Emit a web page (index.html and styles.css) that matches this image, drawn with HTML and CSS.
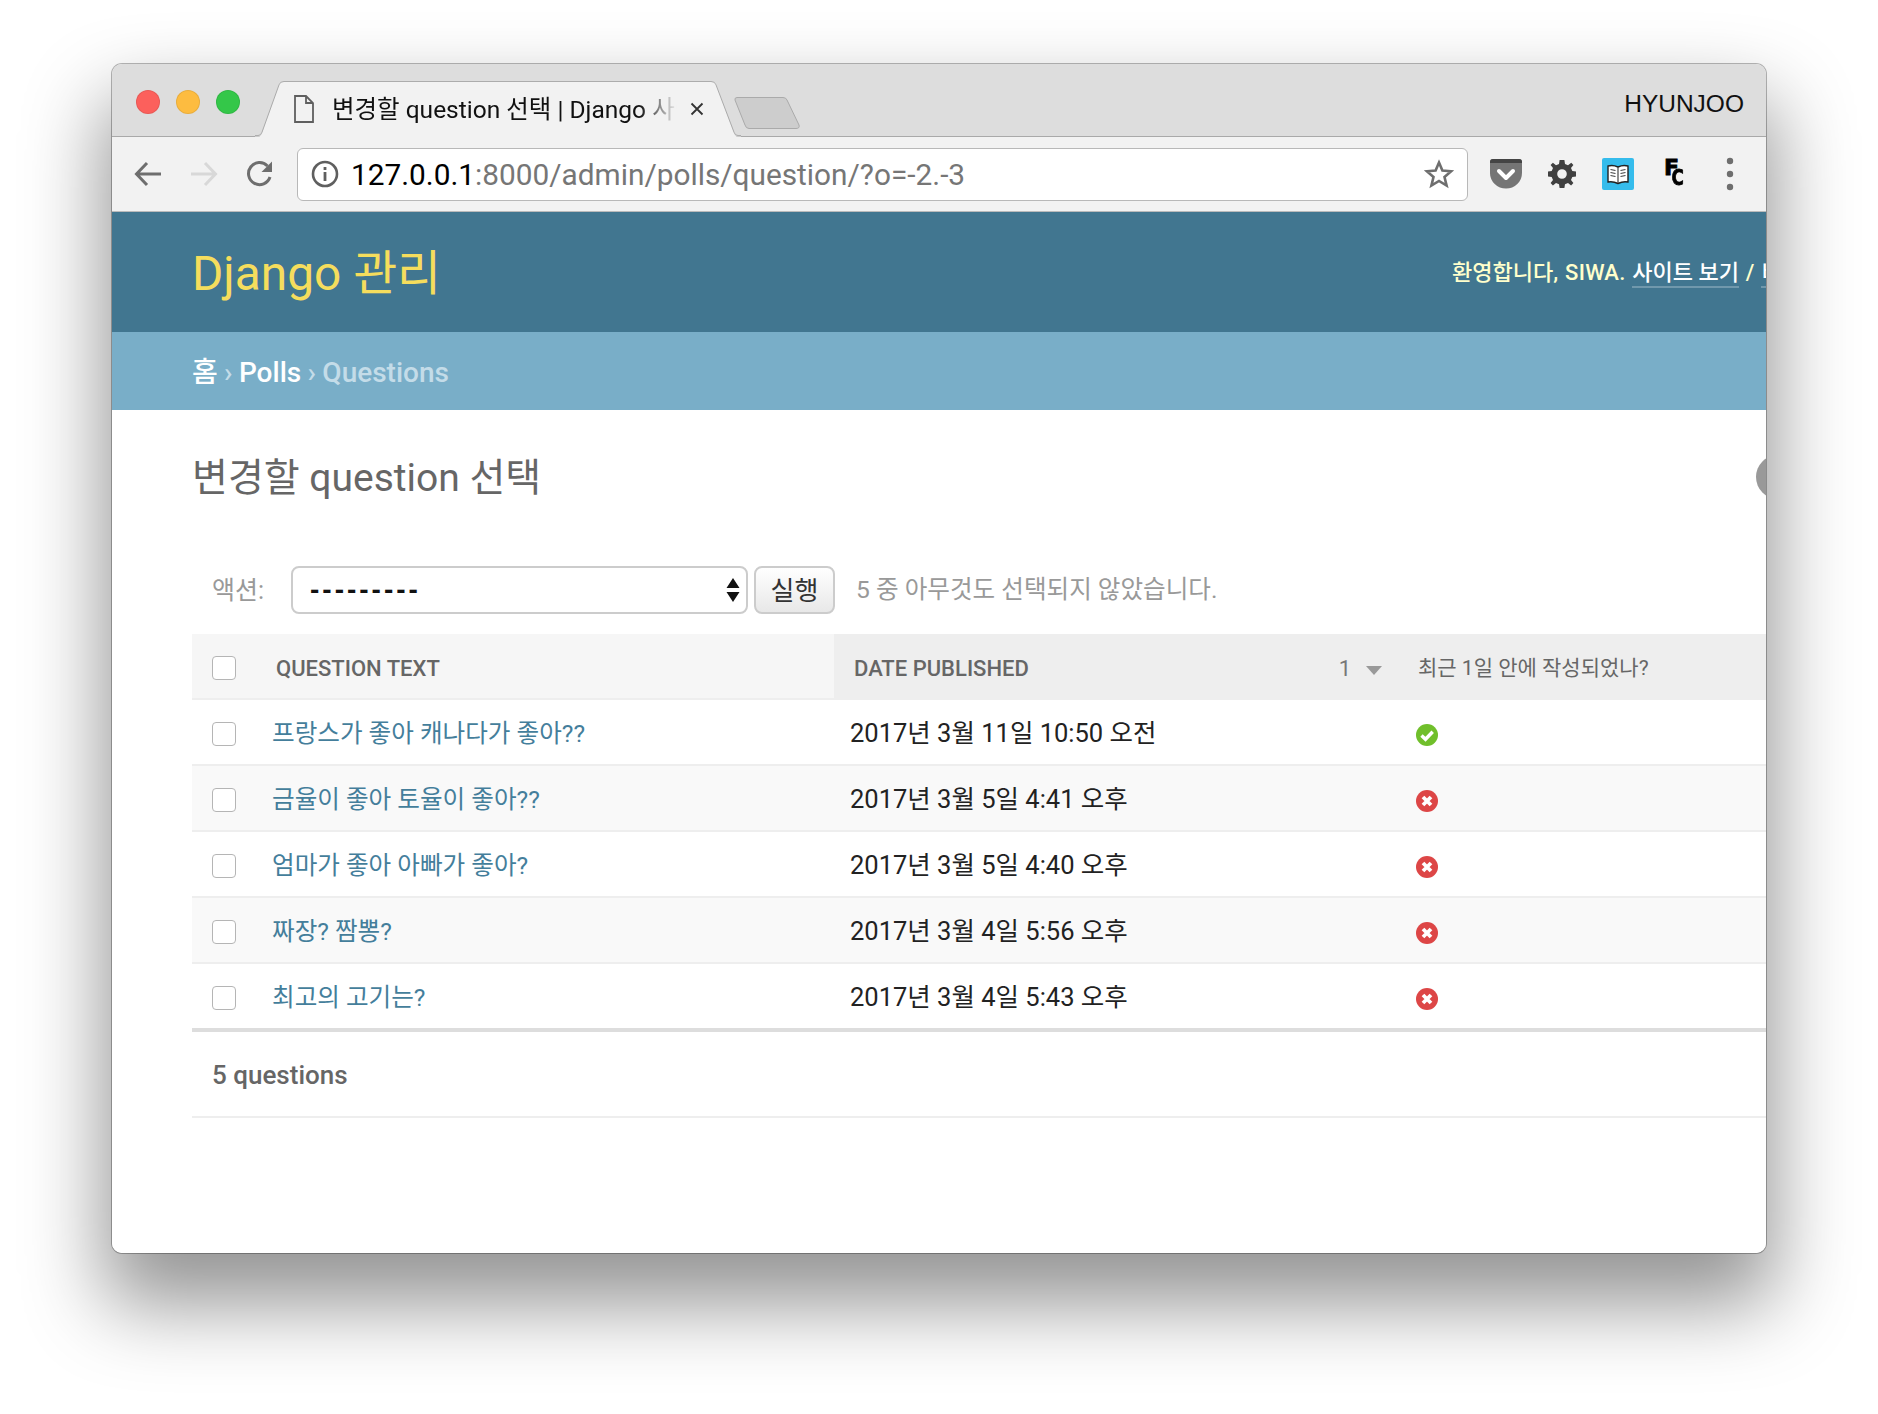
FILE: index.html
```html
<!DOCTYPE html>
<html lang="ko">
<head>
  <meta charset="utf-8" />
  <title>변경할 question 선택 | Django 사이트 관리</title>
  <link rel="stylesheet" href="styles.css">
</head>
<body>
  <div class="window">
    <div class="titlebar">
      <div class="lights">
        <span class="light red"></span>
        <span class="light yellow"></span>
        <span class="light green"></span>
      </div>
      <div class="tab">
        <svg class="tab-shape" width="486" height="56" viewBox="0 0 486 58" preserveAspectRatio="none">
          <path d="M0 57.5 H3 Q6 57.5 7 54 L24 4 Q25 .5 29 .5 H456 Q460 .5 461 4 L479 54 Q480 57.5 483 57.5 H486 V58 H0Z" fill="#f2f2f2"/>
          <path d="M0 56.5 H3 Q6 56.5 7 53 L24 4 Q25 .5 29 .5 H456 Q460 .5 461 4 L479 53 Q480 56.5 483 56.5 H486" fill="none" stroke="#a9a9a9"/>
        </svg>
        <svg class="doc-icon" width="20" height="28" viewBox="0 0 20 28">
          <path d="M1 1 H12 L19 8 V27 H1Z M12 1 V8 H19" fill="none" stroke="#5f5f5f" stroke-width="1.8"/>
        </svg>
        <span class="tab-title">변경할 question 선택 | Django 사이트 관리</span>
        <svg class="tab-close" width="14" height="14" viewBox="0 0 14 14">
          <path d="M1.5 1.5 L12.5 12.5 M12.5 1.5 L1.5 12.5" stroke="#333" stroke-width="1.8"/>
        </svg>
      </div>
      <svg class="newtab" width="66" height="32" viewBox="0 0 66 32">
        <path d="M3 .5 H49 Q52 .5 53 3 L65 28 Q66 31.5 62 31.5 H15 Q12 31.5 11 28 L1 3 Q.5 .5 3 .5Z" fill="#cdcdcd" stroke="#aaa"/>
      </svg>
      <span class="profile">HYUNJOO</span>
    </div>

    <div class="toolbar">
      <svg class="nav-icon back" width="28" height="28" viewBox="0 0 28 28">
        <path d="M27 14 H3 M13 3 L2.5 14 L13 25" fill="none" stroke="#6e6e6e" stroke-width="3"/>
      </svg>
      <svg class="nav-icon" width="28" height="28" viewBox="0 0 28 28">
        <path d="M1 14 H25 M15 3 L25.5 14 L15 25" fill="none" stroke="#d8d8d8" stroke-width="3"/>
      </svg>
      <svg class="nav-icon" width="28" height="28" viewBox="0 0 28 28">
        <path d="M24 17 A11 11 0 1 1 21.5 6" fill="none" stroke="#6e6e6e" stroke-width="3"/>
        <path d="M15.5 12 L26 12 L26 1.5Z" fill="#6e6e6e"/>
      </svg>
      <div class="omnibox">
        <svg class="info-icon" width="28" height="28" viewBox="0 0 28 28">
          <circle cx="14" cy="14" r="12" fill="none" stroke="#5f5f5f" stroke-width="2.6"/>
          <rect x="12.6" y="12" width="2.8" height="9" fill="#5f5f5f"/>
          <rect x="12.6" y="7" width="2.8" height="3" fill="#5f5f5f"/>
        </svg>
        <span class="url"><span class="url-host">127.0.0.1</span>:8000/admin/polls/question/?o=-2.-3</span>
        <svg class="star-icon" width="30" height="30" viewBox="0 0 30 30">
          <path d="M15 3.5 L18.4 11.6 L27.2 12.3 L20.5 18 L22.6 26.6 L15 22 L7.4 26.6 L9.5 18 L2.8 12.3 L11.6 11.6Z" fill="none" stroke="#6e6e6e" stroke-width="2.6"/>
        </svg>
      </div>
      <div class="extensions">
        <svg class="ext-pocket" width="32" height="30" viewBox="0 0 32 30">
          <path d="M0 3 Q0 0 3 0 H29 Q32 0 32 3 V14 A16 15.5 0 0 1 0 14Z" fill="#757575"/>
          <path d="M0 3 Q0 0 3 0 H29 Q32 0 32 3 V4 H0Z" fill="#444"/>
          <path d="M9 12 L16 19 L23 12" fill="none" stroke="#fff" stroke-width="4" stroke-linecap="round" stroke-linejoin="round"/>
        </svg>
        <svg class="ext-gear" width="28" height="28" viewBox="0 0 28 28">
          <path d="M11.6 0 H16.4 L17 4 L20 5.2 L23.3 2.8 L25.4 4.9 L23 8 L24.3 11 L28 11.6 V16.4 L24.3 17 L23 20 L25.4 23.1 L23.1 25.4 L20 23 L17 24.3 L16.4 28 H11.6 L11 24.3 L8 23 L4.9 25.4 L2.6 23.1 L5 20 L3.7 17 L0 16.4 V11.6 L3.7 11 L5 8 L2.6 4.9 L4.9 2.8 L8 5.2 L11 4Z M14 9.2 A4.8 4.8 0 1 0 14 18.8 A4.8 4.8 0 1 0 14 9.2Z" fill="#404040" fill-rule="evenodd"/>
        </svg>
        <svg class="ext-book" width="32" height="32" viewBox="0 0 32 32">
          <rect width="32" height="32" rx="2" fill="#35bcec"/>
          <path d="M16 9 Q11 6.500 6 8 V24 Q11 23 16 25.500 Q21 23 26 24 V8 Q21 6.500 16 9Z" fill="#fff" stroke="#222" stroke-width="1.400"/>
          <path d="M16 9 V25 M8.500 11.500 L13.500 12.500 M8.500 14.500 L13.500 15.500 M8.500 17.500 L13.500 18.500 M18.500 12.500 L23.500 11.500 M18.500 15.500 L23.500 14.500 M18.500 18.500 L23.500 17.500" stroke="#444" stroke-width="1.200"/>
        </svg>
        <span class="fc-badge"><span class="fc-f">F</span><span class="fc-c">C</span></span>
        <svg class="ext-menu" width="8" height="34" viewBox="0 0 8 34">
          <circle cx="4" cy="4" r="3.200" fill="#6e6e6e"/>
          <circle cx="4" cy="17" r="3.200" fill="#6e6e6e"/>
          <circle cx="4" cy="30" r="3.200" fill="#6e6e6e"/>
        </svg>
      </div>
    </div>

    <div class="page">
      <header class="site-header">
        <h1 class="branding">Django 관리</h1>
        <div class="user-tools">환영합니다, <b>SIWA</b>. <a>사이트 보기</a> / <a>비밀번호 변경</a> / <a>로그아웃</a></div>
      </header>
      <div class="breadcrumbs"><a>홈</a> › <a>Polls</a> › Questions</div>

      <main class="content">
        <span class="float-dot"></span>
        <h2 class="page-title">변경할 question 선택</h2>
        <div class="actions">
          <label class="actions-label">액션:</label>
          <div class="fake-select">
            <span class="select-value">---------</span>
            <svg width="14" height="24" viewBox="0 0 14 24">
              <path d="M7 0 L13.500 10 H.5Z M.5 14 H13.500 L7 24Z" fill="#111"/>
            </svg>
          </div>
          <button class="go-btn">실행</button>
          <span class="action-counter">5 중 아무것도 선택되지 않았습니다.</span>
        </div>

        <table class="results">
          <colgroup>
            <col class="col-check"><col class="col-text"><col class="col-date"><col class="col-recent">
          </colgroup>
          <thead>
            <tr>
              <th><span class="check"></span></th>
              <th class="th-text">QUESTION TEXT</th>
              <th class="th-date sorted">
                <div class="th-date-inner"><span>DATE PUBLISHED</span><span class="sort-num">1</span><span class="sort-arrow"></span></div>
              </th>
              <th class="th-recent sorted">최근 1일 안에 작성되었나?</th>
            </tr>
          </thead>
          <tbody>
            <tr>
              <td><span class="check"></span></td>
              <td class="td-text"><a>프랑스가 좋아 캐나다가 좋아??</a></td>
              <td class="td-date">2017년 3월 11일 10:50 오전</td>
              <td class="td-icon">
                <svg width="22" height="22" viewBox="0 0 22 22"><circle cx="11" cy="11" r="11" fill="#70bf2b"/><path d="M5.500 11.500 L9.500 15.300 L16.700 7.800" fill="none" stroke="#fff" stroke-width="3.400"/></svg>
              </td>
            </tr>
            <tr>
              <td><span class="check"></span></td>
              <td class="td-text"><a>금율이 좋아 토율이 좋아??</a></td>
              <td class="td-date">2017년 3월 5일 4:41 오후</td>
              <td class="td-icon">
                <svg width="22" height="22" viewBox="0 0 22 22"><circle cx="11" cy="11" r="11" fill="#dd4646"/><path d="M7 7 L15 15 M15 7 L7 15" stroke="#fff" stroke-width="3.800"/></svg>
              </td>
            </tr>
            <tr>
              <td><span class="check"></span></td>
              <td class="td-text"><a>엄마가 좋아 아빠가 좋아?</a></td>
              <td class="td-date">2017년 3월 5일 4:40 오후</td>
              <td class="td-icon">
                <svg width="22" height="22" viewBox="0 0 22 22"><circle cx="11" cy="11" r="11" fill="#dd4646"/><path d="M7 7 L15 15 M15 7 L7 15" stroke="#fff" stroke-width="3.800"/></svg>
              </td>
            </tr>
            <tr>
              <td><span class="check"></span></td>
              <td class="td-text"><a>짜장? 짬뽕?</a></td>
              <td class="td-date">2017년 3월 4일 5:56 오후</td>
              <td class="td-icon">
                <svg width="22" height="22" viewBox="0 0 22 22"><circle cx="11" cy="11" r="11" fill="#dd4646"/><path d="M7 7 L15 15 M15 7 L7 15" stroke="#fff" stroke-width="3.800"/></svg>
              </td>
            </tr>
            <tr>
              <td><span class="check"></span></td>
              <td class="td-text"><a>최고의 고기는?</a></td>
              <td class="td-date">2017년 3월 4일 5:43 오후</td>
              <td class="td-icon">
                <svg width="22" height="22" viewBox="0 0 22 22"><circle cx="11" cy="11" r="11" fill="#dd4646"/><path d="M7 7 L15 15 M15 7 L7 15" stroke="#fff" stroke-width="3.800"/></svg>
              </td>
            </tr>
          </tbody>
        </table>
        <p class="paginator">5 questions</p>
      </main>
    </div>
  </div>
</body>
</html>
```

FILE: styles.css
```css
html, body { margin: 0; height: 100%; }
body { background: #fff; padding: 64px 112px 0 112px; box-sizing: border-box; overflow: hidden; font-family: Roboto, "Noto Sans CJK KR", sans-serif; color: #333; }

.window { width: 1654px; height: 1189px; border-radius: 10px; display: flex; flex-direction: column; background: #fff; box-shadow: 0 0 0 1px rgba(0,0,0,.28), 0 44px 80px 8px rgba(0,0,0,.42); }

/* title bar */
.titlebar { height: 73px; background: #ddd; border-radius: 10px 10px 0 0; border-bottom: 1px solid #a9a9a9; display: flex; box-sizing: border-box; flex: none; }
.lights { display: flex; gap: 16px; padding: 26px 0 0 24px; flex: none; }
.light { width: 24px; height: 24px; border-radius: 50%; box-sizing: border-box; border: 1px solid rgba(0,0,0,.08); flex: none; }
.red { background: #fc605c; }
.yellow { background: #fdbc40; }
.green { background: #34c749; }
.tab { position: relative; width: 486px; height: 56px; margin: 17px 0 0 15px; display: flex; align-items: center; flex: none; }
.tab-shape { position: absolute; left: 0; top: 0; }
.doc-icon { position: relative; margin-left: 39px; flex: none; }
.tab-title { position: relative; top: -2px; margin-left: 18px; width: 349px; overflow: hidden; white-space: nowrap; font-size: 24.5px; color: #111; -webkit-mask-image: linear-gradient(90deg, #000 88%, transparent 99%); mask-image: linear-gradient(90deg, #000 88%, transparent 99%); }
.tab-close { position: relative; margin-left: 9px; flex: none; }
.newtab { position: relative; margin: 33px 0 0 -7px; flex: none; }
.profile { margin: 25px 22px 0 auto; font-family: "Liberation Sans", sans-serif; font-size: 24.5px; color: #111; line-height: 30px; }

/* toolbar */
.toolbar { height: 75px; background: #f2f2f2; border-bottom: 1px solid #bbb; display: flex; align-items: center; box-sizing: border-box; flex: none; }
.nav-icon { flex: none; margin-left: 28px; }
.back { margin-left: 22px; }
.omnibox { width: 1171px; height: 53px; margin-left: 23px; background: #fff; border: 1px solid #b8b8b8; border-radius: 6px; box-sizing: border-box; display: flex; align-items: center; flex: none; }
.info-icon { margin-left: 13px; flex: none; }
.url { margin-left: 12px; font-size: 29.8px; color: #767676; white-space: nowrap; }
.url-host { color: #000; }
.star-icon { margin-left: auto; margin-right: 13px; }
.extensions { display: flex; align-items: center; margin-left: 22px; }
.ext-gear { margin-left: 26px; }
.ext-book { margin-left: 26px; }
.fc-badge { position: relative; display: block; width: 20px; height: 30px; margin-left: 31px; color: #000; font-family: "DejaVu Sans", sans-serif; font-weight: bold; -webkit-text-stroke: .8px #000; }
.fc-f { position: absolute; left: -1px; top: -3px; font-size: 22px; line-height: 24px; }
.fc-c { position: absolute; left: 5px; top: 7px; font-size: 21px; line-height: 24px; transform: scaleX(.8); }
.ext-menu { margin-left: 41px; }

/* django */
.page { flex: 1; overflow: hidden; background: #fff; border-radius: 0 0 10px 10px; display: flex; flex-direction: column; }
.site-header { height: 120px; background: #417690; display: flex; align-items: center; padding: 0 0 6px 80px; box-sizing: border-box; flex: none; white-space: nowrap; }
.branding { margin: 0; font-size: 47.8px; font-weight: 400; color: #f5dd5d; }
.user-tools { font-size: 22px; font-weight: 500; color: #ffc; margin-left: auto; flex: none; width: 314px; overflow: hidden; padding-top: 4px; padding-bottom: 2px; word-spacing: 1.5px; }
.user-tools b { font-weight: 500; letter-spacing: .25px; }
.user-tools a { color: #fff; word-spacing: 0; padding-bottom: 1px; border-bottom: 2px solid rgba(255,255,255,.25); }
.breadcrumbs { height: 78px; background: #79aec8; color: #c4dce8; padding: 4px 0 0 80px; box-sizing: border-box; font-size: 28px; font-weight: 500; line-height: 74px; word-spacing: -.6px; flex: none; }
.breadcrumbs a { color: #fff; }

.content { flex: 1; padding: 0 0 0 80px; position: relative; }
.float-dot { position: absolute; left: 1644px; top: 45px; width: 44px; height: 44px; border-radius: 50%; background: #999; }
.page-title { margin: 0; padding-top: 44px; font-size: 39px; line-height: 48px; font-weight: 400; color: #666; }
.actions { display: flex; align-items: center; height: 48px; margin-top: 64px; white-space: nowrap; }
.actions-label { width: 99px; padding: 0 0 4px 20px; box-sizing: border-box; font-size: 25px; color: #999; flex: none; }
.fake-select { width: 457px; height: 48px; box-sizing: border-box; border: 2px solid #ccc; border-radius: 8px; display: flex; align-items: center; justify-content: space-between; padding: 0 6px 0 17px; flex: none; }
.select-value { font: bold 28px "Liberation Sans", sans-serif; letter-spacing: 3px; color: #111; }
.go-btn { width: 81px; height: 48px; margin-left: 6px; border: 2px solid #ccc; border-radius: 8px; background: linear-gradient(#fff, #e8e8e8); font: 26px Roboto, "Noto Sans CJK KR", sans-serif; color: #333; padding: 0 0 4px 0; flex: none; }
.action-counter { margin-left: 21px; padding-bottom: 7px; font-size: 24.6px; color: #999; }

.results { width: 1574px; margin-top: 20px; border-collapse: separate; border-spacing: 0; table-layout: fixed; }
.col-check { width: 62px; }
.col-text { width: 580px; }
.col-date { width: 566px; }
.col-recent { width: 366px; }
.results th { height: 66px; padding: 0; box-sizing: border-box; background: #f6f6f6; text-align: left; font-size: 22px; font-weight: 500; color: #666; border-bottom: 2px solid #eee; }
.results th.sorted { background: #eee; }
.results td { height: 66px; padding: 0; box-sizing: border-box; border-bottom: 2px solid #eee; font-size: 26px; }
.results tbody tr:nth-child(even) td { background: #f9f9f9; }
.results tbody tr:last-child td { height: 68px; border-bottom: 4px solid #ddd; }
.check { display: block; width: 24px; height: 24px; margin: 4px 0 0 20px; box-sizing: border-box; border: 1px solid #b5b5b5; border-radius: 4px; background: #fff; }
.results th.th-text { padding: 5px 0 0 22px; }
.results th.th-date { padding: 5px 0 0 20px; }
.th-date-inner { display: flex; align-items: center; }
.sort-num { margin-left: auto; font-weight: 400; color: #777; }
.sort-arrow { width: 0; height: 0; border: 8px solid transparent; border-top: 9px solid #999; border-bottom: 0; margin: 3px 18px 0 15px; }
.results th.th-recent { padding-left: 18px; font-weight: 400; font-size: 21px; }
.results td.td-text { padding: 0 0 3px 18px; }
.td-text a { color: #447e9b; font-size: 24.6px; }
.results td.td-date { padding: 0 0 3px 16px; color: #222; font-size: 25.5px; }
.results td.td-icon { padding-left: 16px; }
.td-icon svg { display: block; margin-top: 6px; }
.paginator { margin: 0; height: 86px; line-height: 86px; width: 1574px; padding-left: 20px; box-sizing: border-box; border-bottom: 2px solid #eee; font-size: 26px; font-weight: 500; color: #666; }
```
